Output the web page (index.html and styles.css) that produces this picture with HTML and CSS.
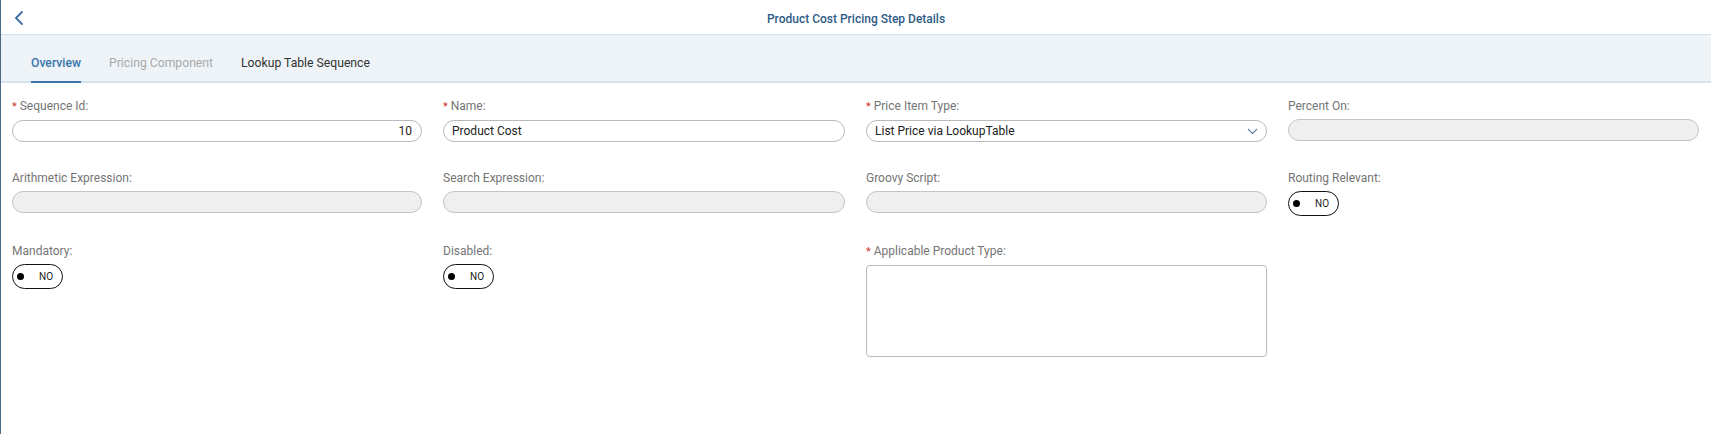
FILE: index.html
```html
<!DOCTYPE html>
<html lang="en">
<head>
<meta charset="utf-8">
<title>Product Cost Pricing Step Details</title>
<link rel="stylesheet" href="styles.css">
</head>
<body>
<div class="app">
  <header class="header">
    <button class="back" aria-label="Back">
      <svg width="10" height="14" viewBox="0 0 10 14"><path d="M8 1 L2 7 L8 13" fill="none" stroke="#3d6fa5" stroke-width="1.8" stroke-linecap="round" stroke-linejoin="round"/></svg>
    </button>
    <h1 class="title">Product Cost Pricing Step Details</h1>
    <span></span>
  </header>
  <nav class="tabs">
    <div class="tab active">Overview</div>
    <div class="tab disabled">Pricing Component</div>
    <div class="tab">Lookup Table Sequence</div>
  </nav>
  <main class="form">
    <div class="field">
      <label class="label"><span class="req">*</span> Sequence Id:</label>
      <div class="input num">10</div>
    </div>
    <div class="field">
      <label class="label"><span class="req">*</span> Name:</label>
      <div class="input">Product Cost</div>
    </div>
    <div class="field">
      <label class="label"><span class="req">*</span> Price Item Type:</label>
      <div class="input select">List Price via LookupTable
        <svg class="chev" width="11" height="7" viewBox="0 0 11 7"><path d="M1 1 L5.5 5.5 L10 1" fill="none" stroke="#5a7fa8" stroke-width="1.1"/></svg>
      </div>
    </div>
    <div class="field">
      <label class="label">Percent On:</label>
      <div class="input ro"></div>
    </div>

    <div class="field">
      <label class="label">Arithmetic Expression:</label>
      <div class="input ro"></div>
    </div>
    <div class="field">
      <label class="label">Search Expression:</label>
      <div class="input ro"></div>
    </div>
    <div class="field">
      <label class="label">Groovy Script:</label>
      <div class="input ro"></div>
    </div>
    <div class="field">
      <label class="label">Routing Relevant:</label>
      <div class="toggle"><span class="dot"></span><span class="tlabel">NO</span></div>
    </div>

    <div class="field">
      <label class="label">Mandatory:</label>
      <div class="toggle"><span class="dot"></span><span class="tlabel">NO</span></div>
    </div>
    <div class="field">
      <label class="label">Disabled:</label>
      <div class="toggle"><span class="dot"></span><span class="tlabel">NO</span></div>
    </div>
    <div class="field">
      <label class="label"><span class="req">*</span> Applicable Product Type:</label>
      <div class="textarea"></div>
    </div>
  </main>
</div>
</body>
</html>
```

FILE: styles.css
```css
* { box-sizing: border-box; }
html, body {
  margin: 0;
  padding: 0;
  background: #fff;
  font-family: Roboto, "Liberation Sans", Arial, sans-serif;
  overflow: hidden;
}
.app {
  height: 434px;
  border-left: 1px solid #4b6a88;
}
.header {
  height: 35px;
  border-bottom: 1px solid #d3e0ed;
  display: grid;
  grid-template-columns: 1fr auto 1fr;
  align-items: center;
}
.back {
  border: 0;
  background: none;
  padding: 0 0 0 13px;
  margin: 0;
  width: 40px;
  height: 34px;
  display: flex;
  align-items: center;
  justify-content: flex-start;
  padding-top: 1px;
}
.title {
  margin: 0;
  padding-top: 3px;
  font-size: 12px;
  font-weight: 500;
  color: #2f5b86;
  line-height: 14px;
}
.tabs {
  height: 48px;
  background: #eef3f8;
  border-bottom: 2px solid #d6e2ef;
  display: flex;
  padding-left: 30px;
  gap: 28px;
}
.tab {
  font-size: 12.2px;
  line-height: 14px;
  padding-top: 21px;
  color: #333;
  height: 48px;
}
.tab.active {
  color: #3a75ad;
  font-weight: 500;
  border-bottom: 2px solid #3a75ad;
}
.tab.disabled { color: #a9a9a9; }

.form {
  display: grid;
  grid-template-columns: 410px 402px 401px 411px;
  grid-template-rows: 72px 73px auto;
  column-gap: 21px;
  padding: 16px 0 0 11px;
  align-items: start;
}
.field {
  display: flex;
  flex-direction: column;
  gap: 6px;
}
.label {
  font-size: 12px;
  line-height: 14px;
  color: #757575;
}
.req {
  color: #d0342c;
  font-size: 11px;
}
.input {
  height: 22px;
  border: 1px solid #b9b9b9;
  border-radius: 11px;
  background: #fff;
  font-size: 12px;
  color: #222;
  line-height: 20px;
  padding: 0 8px;
  display: flex;
  align-items: center;
}
.input.num { justify-content: flex-end; padding-right: 9px; }
.input.ro { background: #efefef; border-color: #c4c4c4; }
.input.select { justify-content: space-between; padding-right: 8px; }
.chev { display: block; }
.toggle {
  width: 51px;
  height: 25px;
  border: 1.5px solid #111;
  border-radius: 13px;
  display: flex;
  align-items: center;
  padding-left: 4px;
}
.dot {
  width: 7px;
  height: 7px;
  border-radius: 50%;
  background: #000;
}
.tlabel {
  font-size: 10px;
  color: #222;
  margin-left: 15px;
}
.textarea {
  height: 92px;
  border: 1px solid #b9b9b9;
  border-radius: 4px;
  background: #fff;
}
```
